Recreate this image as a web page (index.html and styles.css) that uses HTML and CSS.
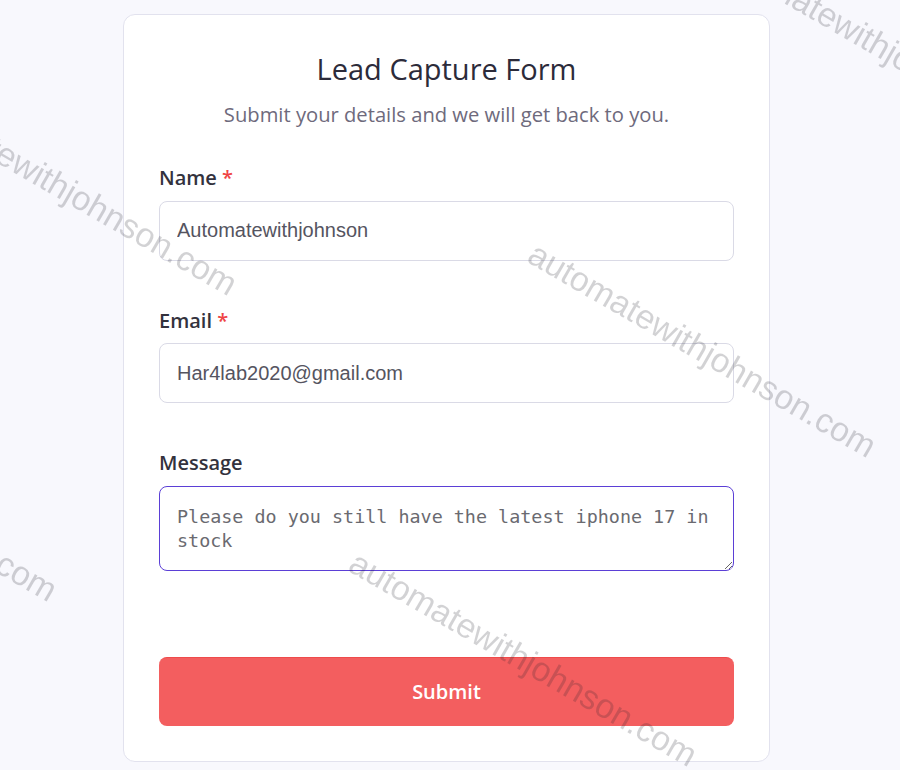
FILE: index.html
```html
<!DOCTYPE html>
<html lang="en">
<head>
  <meta charset="UTF-8">
  <meta name="viewport" content="width=device-width, initial-scale=1.0">
  <title>Lead Capture Form</title>
  <link rel="stylesheet" href="styles.css">
</head>
<body>
  <div class="card">
    <h1>Lead Capture Form</h1>
    <p class="subtitle">Submit your details and we will get back to you.</p>
    <form id="leadForm">
      <div class="form-group">
        <label for="name">Name <span class="required">*</span></label>
        <input type="text" id="name" value="Automatewithjohnson" required>
      </div>
      <div class="form-group">
        <label for="email">Email <span class="required">*</span></label>
        <input type="email" id="email" value="Har4lab2020@gmail.com" required>
      </div>
      <div class="form-group message-group">
        <label for="message">Message</label>
        <textarea id="message" class="focused">Please do you still have the latest iphone 17 in stock</textarea>
      </div>
      <button type="submit" class="submit-btn">Submit</button>
    </form>
  </div>

  <!-- watermark layer -->
  <div class="watermarks">
    <span class="wm wm-1">automatewithjohnson.com</span>
    <span class="wm wm-2">automatewithjohnson.com</span>
    <span class="wm wm-3">automatewithjohnson.com</span>
    <span class="wm wm-4">automatewithjohnson.com</span>
    <span class="wm wm-5">automatewithjohnson.com</span>
  </div>
</body>
</html>
```

FILE: styles.css
```css
body {
  font-family: "Open Sans", Arial, sans-serif;
  background-color: #f8f8fd;
  margin: 0;
  padding: 14px 7px 0 0;
}
.card {
  width: 647px;
  box-sizing: border-box;
  margin: 0 auto;
  padding: 37px 35px 35px;
  background: #fff;
  border: 1px solid #e2e2ee;
  border-radius: 12px;
}
h1 {
  margin: 0;
  text-align: center;
  font-size: 29px;
  font-weight: 400;
  line-height: 1.2;
  color: #2c2b3a;
}
.subtitle {
  margin: 12px 0 34px;
  text-align: center;
  font-size: 20.2px;
  line-height: 1.5;
  color: #6e6a7c;
}
.form-group {
  display: flex;
  flex-direction: column;
  margin-bottom: 45px;
}
label {
  font-size: 20px;
  font-weight: 600;
  line-height: 1.5;
  color: #33323d;
  margin-bottom: 7.5px;
}
.required {
  color: #ef4444;
}
input {
  height: 60px;
  box-sizing: border-box;
  padding: 0 17px;
  font-family: "Liberation Sans", Arial, sans-serif;
  font-size: 20px;
  color: #55545f;
  border: 1px solid #dadae6;
  border-radius: 8px;
  background: #fff;
}
textarea {
  height: 85px;
  box-sizing: border-box;
  padding: 18px 17px 17px;
  font-family: "DejaVu Sans Mono", "Liberation Mono", monospace;
  font-size: 18.4px;
  line-height: 24px;
  color: #6a6a70;
  border: 1px solid #dadae6;
  border-radius: 8px;
  background: #fff;
}
textarea.focused {
  border-color: #5b3fd6;
}
.message-group {
  margin-bottom: 86px;
}
.submit-btn {
  width: 100%;
  height: 69px;
  font-family: "Open Sans", Arial, sans-serif;
  font-size: 20px;
  font-weight: 600;
  color: #fff;
  background-color: #f35e5f;
  border: none;
  border-top: 1px solid #ef4b4b;
  border-radius: 8px;
  cursor: pointer;
}
.watermarks {
  position: fixed;
  inset: 0;
  overflow: hidden;
  pointer-events: none;
}
.wm {
  position: absolute;
  white-space: nowrap;
  font-family: "Liberation Sans", Arial, sans-serif;
  font-size: 34px;
  line-height: 1;
  color: rgba(30, 30, 40, 0.2);
  transform: rotate(30deg);
  transform-origin: 0 0;
}
.wm-1 { left: 722px; top: -66px; }
.wm-2 { left: -99px; top: 74px; }
.wm-3 { left: 540px; top: 236px; }
.wm-4 { left: 361px; top: 545px; }
.wm-5 { left: -279px; top: 380px; }
```
